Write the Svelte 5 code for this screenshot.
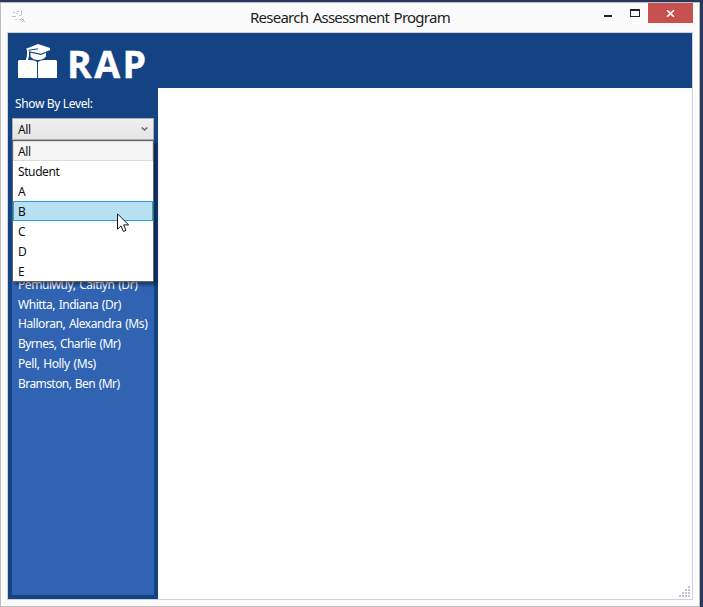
<script>
  const levels = ['All', 'Student', 'A', 'B', 'C', 'D', 'E'];
  const people = [
    { name: 'Pemulwuy, Caitlyn (Dr)', sp: -0.44 },
    { name: 'Whitta, Indiana (Dr)', sp: -0.47 },
    { name: 'Halloran, Alexandra (Ms)', sp: -0.44 },
    { name: 'Byrnes, Charlie (Mr)', sp: -0.53 },
    { name: 'Pell, Holly (Ms)', sp: -0.39 },
    { name: 'Bramston, Ben (Mr)', sp: -0.57 }
  ];
  const hovered = 'B';
  const selected = 'All';
  const dots = [[10, 1], [7, 4], [10, 4], [4, 7], [7, 7], [10, 7], [1, 10], [4, 10], [7, 10], [10, 10]];
</script>

<div class="desktop">
  <div class="window">
    <header class="titlebar">
      <svg class="appicon" width="14" height="14" viewBox="0 0 14 14" shape-rendering="crispEdges">
        <path d="M1 2.5h2M5 1.5h2M4 3.5h2M0 6.5h4M9.5 1v4M3 9.5h2M7 9.5h2M7 5.5h2M9 8.5h1M10 9.5h2M9 10.5h1M11 10.5h1M10 11.5h1M12 11.5h1" stroke="#c4c4c4" fill="none" />
      </svg>
      <h1>Research Assessment Program</h1>
      <div class="controls">
        <svg width="56" height="20" viewBox="0 0 56 20" shape-rendering="crispEdges">
          <path d="M12 12h8v2h-8z" fill="#222" />
          <path d="M38 6h10v8h-10zM39 8v5h8v-5z" fill="#222" fill-rule="evenodd" />
        </svg>
        <button class="close" aria-label="Close">
          <svg width="9" height="7" viewBox="0 0 9 7"><path d="M1 .2L8 6.8M8 .2L1 6.8" stroke="#fff" stroke-width="1.7" /></svg>
        </button>
      </div>
    </header>
    <div class="client">
      <div class="banner">
        <svg class="logo" width="40" height="35" viewBox="0 0 40 35">
          <path d="M1 16H12Q17 16 19 18V34H0V17zM20 18Q22 16 27 16H38L39 17V34H20z" fill="#fff" />
          <path d="M20 0L32 4V6L23 9.8L11 7.2V12L10 16H8L9 11V5.5L7.5 5z" fill="#fff" />
          <path d="M12.5 8.8L23 11L28 8.8V12.5Q25 16 20 16T12.5 12.5z" fill="#fff" />
          <path d="M10.5 6.3L20 4.8" stroke="#144384" fill="none" />
        </svg>
        <span class="brand">RAP</span>
      </div>
      <div class="main">
        <aside>
          <div class="label">Show By Level:</div>
          <div class="combo">
            <div class="box">
              <span>{selected}</span>
              <svg width="7" height="5" viewBox="0 0 7 5"><path d="M.7 .5L3.5 3.1L6.3 .5" fill="none" stroke="#606060" stroke-width="1.3" /></svg>
            </div>
            <ul class="popup">
              {#each levels as level}
                <li class:hover={level === hovered} class:sel={level === selected}>{level}</li>
              {/each}
            </ul>
            <svg class="cursor" width="13" height="20" viewBox="0 0 13 20">
              <path d="M.5 .8V16.2L4 12.9L6.4 18.5L9 17.4L6.6 11.9H11.6z" fill="#fff" stroke="#111" />
            </svg>
          </div>
          <ul class="people">
            {#each people as p}
              <li style="letter-spacing: {p.sp}px">{p.name}</li>
            {/each}
          </ul>
        </aside>
        <section class="content">
          <svg width="12" height="12" viewBox="0 0 12 12" shape-rendering="crispEdges">
            {#each dots as [x, y]}
              <rect {x} {y} width="2" height="2" fill="#bcc4d6" />
            {/each}
          </svg>
        </section>
      </div>
    </div>
  </div>
</div>

<style>
  .desktop { box-sizing: border-box; width: 703px; height: 607px; padding: 2px 3px 0 0; overflow: hidden; background: #28385c; font: 12px 'Noto Sans', sans-serif; }
  .window { box-sizing: border-box; height: 605px; border: 1px solid #bdbdbd; padding: 0 6px 6px 6px; display: flex; flex-direction: column; background: #fbfbfb; }
  .titlebar { display: flex; height: 29px; flex: none; }
  .appicon { margin: 7px 0 0 5px; }
  h1 { margin: 0 0 0 224px; font: 15px/28px 'Noto Sans', sans-serif; letter-spacing: -0.75px; word-spacing: 1.3px; color: #222; white-space: nowrap; flex: 1; }
  .controls { display: flex; }
  .close { width: 45px; height: 20px; padding: 0; border: 0; background: #c75050; display: flex; align-items: center; justify-content: center; }
  .client { flex: 1; display: flex; flex-direction: column; border: 1px solid #d2d2d2; background: #fff; }
  .banner { height: 55px; flex: none; display: flex; background: #144384; color: #fff; }
  .logo { margin: 11px 0 0 10px; }
  .brand { margin-left: 9px; font: bold 37.5px/62px 'Open Sans', sans-serif; letter-spacing: 2.4px; -webkit-text-stroke: 0.4px #fff; }
  .main { flex: 1; display: flex; }
  aside { box-sizing: border-box; width: 150px; padding: 0 4px 4px; display: flex; flex-direction: column; background: #144384; }
  .label { height: 30px; padding-left: 3px; line-height: 32px; color: #fff; letter-spacing: -0.35px; }
  .combo { position: relative; z-index: 1; color: #111; letter-spacing: -0.4px; }
  .box { box-sizing: border-box; height: 22px; border: 1px solid #acacac; padding: 0 5px; display: flex; align-items: center; justify-content: space-between; background: linear-gradient(#f0f0f0, #e5e5e5); }
  ul { list-style: none; margin: 0; padding: 0; }
  .popup { position: absolute; top: 22px; left: 0; box-sizing: border-box; width: 142px; border: 1px solid #646464; background: #fff; box-shadow: 3px 3px 3px rgba(0, 0, 0, 0.4); }
  .popup li { box-sizing: border-box; height: 20px; padding-left: 4px; border: 1px solid transparent; line-height: 19px; }
  .popup .sel { background: #f5f5f5; border-color: #dadada; }
  .popup .hover { background: #b7e0f1; border-color: #26a0da; }
  .cursor { position: absolute; left: 105px; top: 95px; }
  .people { flex: 1; padding: 134.8px 0 0 6px; background: #3163b3; color: #fff; white-space: nowrap; word-spacing: 1px; }
  .people li { height: 19.75px; line-height: 20px; }
  .content { box-sizing: border-box; flex: 1; display: flex; align-items: flex-end; justify-content: flex-end; padding: 0 2px 2px 0; }
</style>
